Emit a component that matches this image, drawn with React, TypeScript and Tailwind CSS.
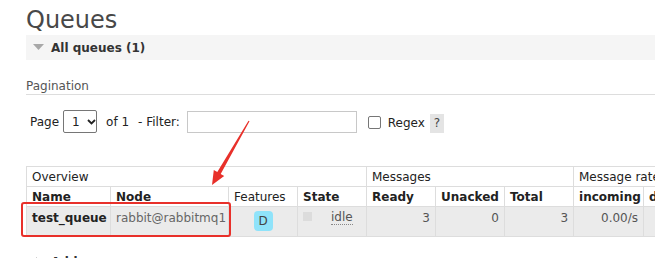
import React from 'react';

const COLS = [84, 118, 69, 69, 69, 69, 69, 70, 90, 60];

function Caret({ open }: { open: boolean }) {
  return open ? (
    <svg width="11" height="7" viewBox="0 0 11 7" className="shrink-0">
      <polygon points="0,0 11,0 5.5,6" fill="#a8a8a8" />
    </svg>
  ) : (
    <svg width="7" height="11" viewBox="0 0 7 11" className="shrink-0">
      <polygon points="0,0 6,5.5 0,11" fill="#a8a8a8" />
    </svg>
  );
}

function QueueTable() {
  const th = 'border border-[#ddd] px-[5px] h-[20px] text-left align-middle whitespace-nowrap overflow-hidden';
  const td = 'border border-[#ddd] px-[5px] pt-[4px] h-[30px] align-top whitespace-nowrap leading-[14px] overflow-hidden';
  return (
    <table className="table-fixed border-collapse w-[757px] text-[12px] text-[#222]">
      <colgroup>
        {COLS.map((w, i) => (
          <col key={i} style={{ width: w }} />
        ))}
      </colgroup>
      <thead>
        <tr>
          <th colSpan={4} className={`${th} font-normal`}>Overview</th>
          <th colSpan={3} className={`${th} font-normal`}>Messages</th>
          <th colSpan={3} className={`${th} font-normal`}>Message rates</th>
        </tr>
        <tr>
          <th className={`${th} font-bold`}>Name</th>
          <th className={`${th} font-bold`}>Node</th>
          <th className={`${th} font-normal`}>Features</th>
          <th className={`${th} font-bold`}>State</th>
          <th className={`${th} font-bold`}>Ready</th>
          <th className={`${th} font-bold`}>Unacked</th>
          <th className={`${th} font-bold`}>Total</th>
          <th className={`${th} font-bold`}>incoming</th>
          <th className={`${th} font-bold`}>deliver / get</th>
          <th className={`${th} font-bold`}>ack</th>
        </tr>
      </thead>
      <tbody>
        <tr className="bg-[#ebebeb]">
          <td className={`${td} font-bold`}>test_queue</td>
          <td className={`${td} text-[#666]`}>rabbit@rabbitmq1</td>
          <td className={`${td} pt-[3px]`}>
            <div className="flex justify-center">
              <span className="w-[19px] h-[20px] rounded-[4px] bg-[#8fe3fa] text-[#444] flex items-center justify-center">D</span>
            </div>
          </td>
          <td className={td}>
            <div className="flex items-start">
              <span className="w-[9px] h-[9px] bg-[#dcdcdc] mt-[1px]" />
              <span className="ml-[19px] text-[#555] border-b border-dotted border-[#888] leading-[13px]">idle</span>
            </div>
          </td>
          <td className={`${td} text-right text-[#555]`}>3</td>
          <td className={`${td} text-right text-[#555]`}>0</td>
          <td className={`${td} text-right text-[#555]`}>3</td>
          <td className={`${td} text-right text-[#555]`}>0.00/s</td>
          <td className={`${td} text-right text-[#555]`}>0.00/s</td>
          <td className={`${td} text-right text-[#555]`}>0.00/s</td>
        </tr>
      </tbody>
    </table>
  );
}

export default function App() {
  return (
    <div className="relative w-[655px] h-[258px] overflow-hidden bg-white font-['DejaVu_Sans',sans-serif] text-[12px] text-[#222]">
      <div className="pl-[26px]">
        <h1 className="text-[24px] leading-[28px] pt-[6px] h-[35px] text-[#484848] font-normal">Queues</h1>
        <div className="h-[25px] bg-[#f5f5f5] flex items-center pl-[7px] gap-[7px]">
          <Caret open />
          <span className="font-bold text-[#333]">All queues (1)</span>
        </div>
        <div className="mt-[19px] h-[16px] leading-[14px] text-[#555] border-b border-[#ddd]">Pagination</div>
        <div className="mt-[15px] h-[23px] flex items-center pl-[4px] text-[#222]">
          <span>Page</span>
          <div className="ml-[4px] w-[34px] h-[23px] border border-[#767676] rounded-[2px] flex items-center pl-[8px] gap-[7px]">
            <span>1</span>
            <svg width="9" height="6" viewBox="0 0 9 6">
              <polyline points="1,1 4.5,4.5 8,1" fill="none" stroke="#222" strokeWidth="1.8" />
            </svg>
          </div>
          <span className="ml-[9px]">of 1</span>
          <span className="ml-[9px]">- Filter:</span>
          <div className="ml-[7px] w-[170px] h-[22px] border border-[#c8c8c8]" />
          <div className="ml-[11px] w-[13px] h-[13px] border border-[#767676] rounded-[2px] mt-[1px]" />
          <span className="ml-[7px] mt-[3px]">Regex</span>
          <span className="ml-[5px] mt-[3px] w-[14px] h-[19px] bg-[#e4e4e4] flex items-center justify-center text-[#444]">?</span>
        </div>
        <div className="mt-[33px]">
          <QueueTable />
        </div>
        <div className="mt-[16px] flex items-center gap-[8px] pl-[10px]">
          <Caret open={false} />
          <span className="font-bold text-[#333]">Add a new queue</span>
        </div>
      </div>

      {/* annotation overlay */}
      <div className="absolute left-[21px] top-[202px] w-[210px] h-[35px] border-[2.5px] border-[#e8302a] rounded-[3px]" />
      <svg className="absolute left-0 top-0" width="655" height="258" viewBox="0 0 655 258">
        <polygon
          points="249.5,121.3 248.5,120.7 217.3,171.9 213.8,169.9 212,185 224.2,175.9 220.7,173.9"
          fill="#e8302a"
        />
      </svg>
    </div>
  );
}
